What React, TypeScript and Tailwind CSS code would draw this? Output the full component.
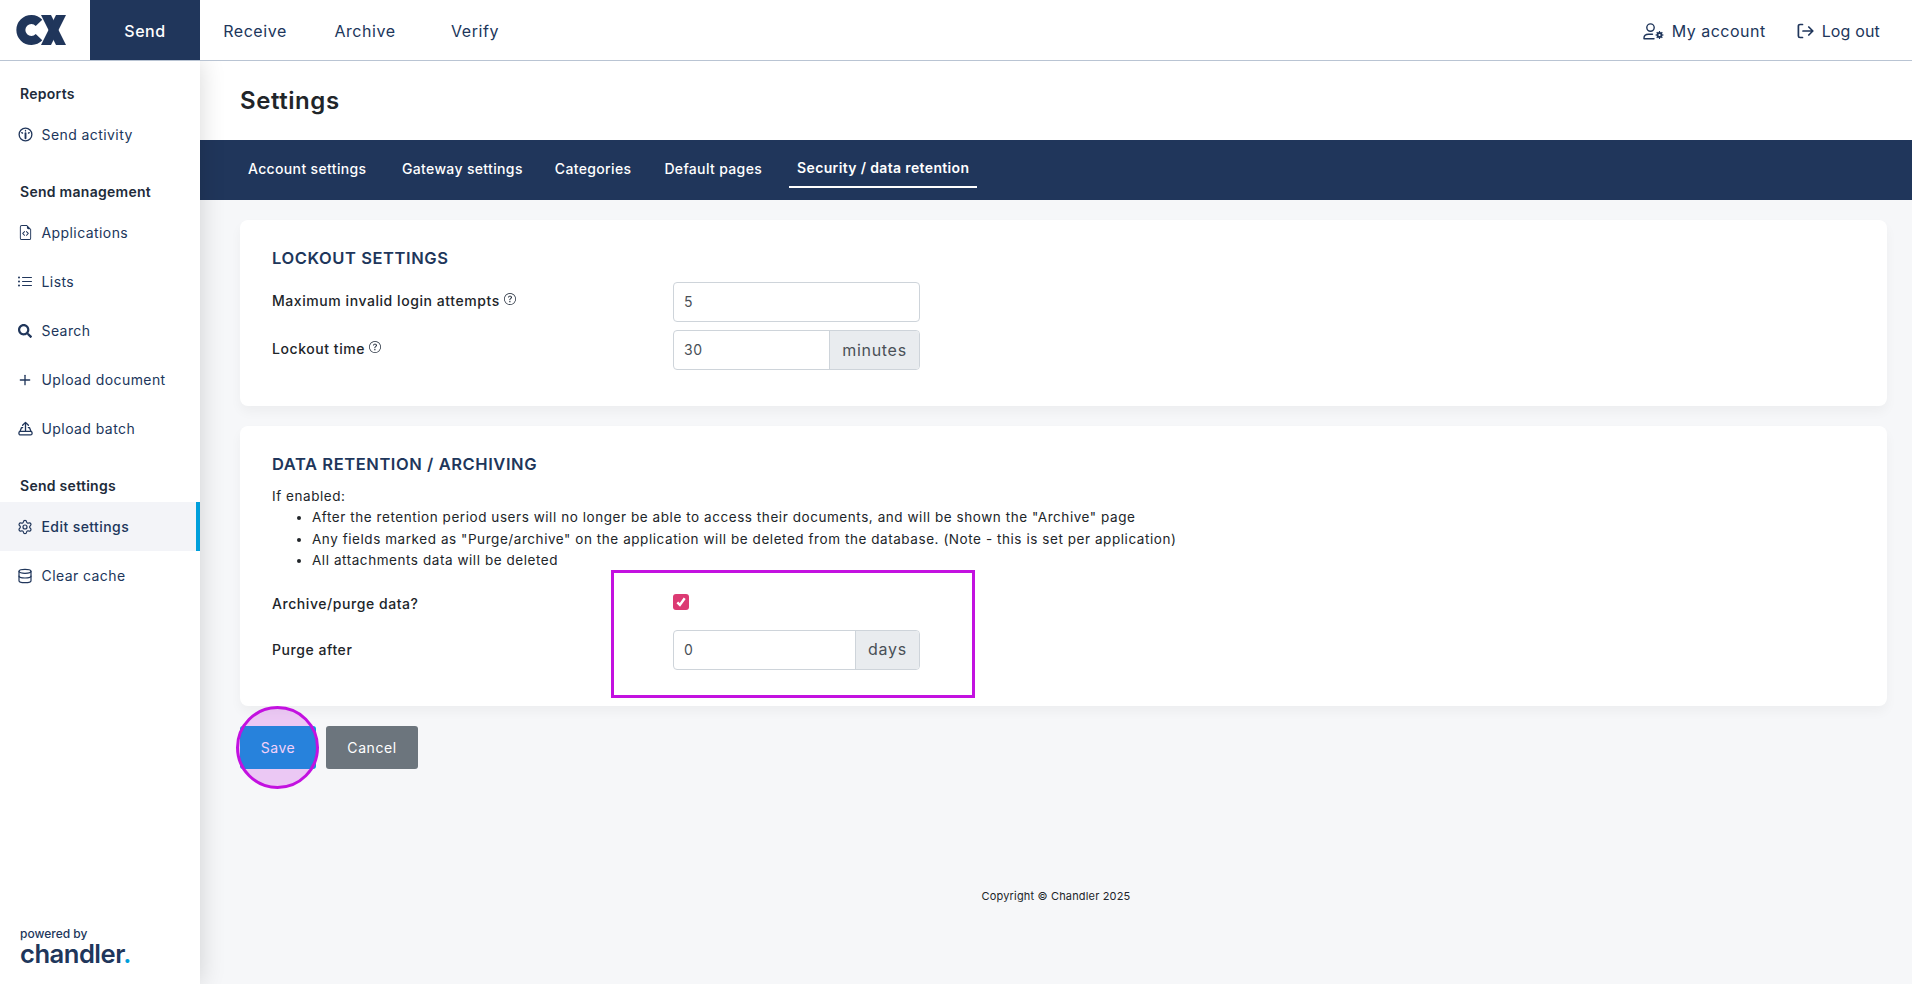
import React from "react";
import { Plus, Settings, Database } from "lucide-react";
import { BsFileEarmarkCode, BsListUl, BsQuestionCircle } from "react-icons/bs";
import { FaSearch } from "react-icons/fa";

function Logo() {
  return (
    <svg width="52" height="32" viewBox="0 0 52 32" className="block">
      <path d="M23 8.8 A 10.5 10.5 0 1 0 23 23.2" fill="none" stroke="#20365b" strokeWidth="9" />
      <path d="M25 1 H35 L50 31 H40 Z" fill="#20365b" />
      <path d="M50 1 H40 L25 31 H35 Z" fill="#20365b" />
    </svg>
  );
}

function Gauge() {
  return (
    <svg width="15" height="15" viewBox="0 0 16 16" fill="none" stroke="#20365b" strokeWidth="1.4" strokeLinecap="round">
      <circle cx="8" cy="8" r="6.8" />
      <path d="M8 3.6v.6M4 6l.8.5M12 6l-.8.5" />
      <path d="M8 6.5v5.5" strokeWidth="2" />
    </svg>
  );
}

function UploadBatch() {
  return (
    <svg width="15" height="15" viewBox="0 0 16 16" fill="none" stroke="#20365b" strokeWidth="1.4" strokeLinecap="round" strokeLinejoin="round">
      <path d="M8 10V1.6M4.9 4.6L8 1.5l3.1 3.1" />
      <path d="M5 7H3.8L2.2 11M11 7h1.2l1.6 4" />
      <rect x="1" y="11" width="14" height="3.8" rx="1.6" />
    </svg>
  );
}

function AccountIcon() {
  return (
    <svg width="21" height="17" viewBox="0 0 21 17" fill="none" stroke="#20365b" strokeWidth="1.4" strokeLinecap="round" className="mr-[8px]">
      <circle cx="7.5" cy="4.6" r="3.7" />
      <path d="M1 15.8v-.8c0-2.4 2-3.8 4.5-3.8h4M1 15.8h10" />
      <circle cx="16.5" cy="12" r="3" fill="#20365b" stroke="none" />
      <path d="M16.5 8v8M12.5 12h8M13.7 9.2l5.6 5.6M19.3 9.2l-5.6 5.6" strokeWidth="1.2" strokeLinecap="butt" />
      <circle cx="16.5" cy="12" r="1.1" fill="white" stroke="none" />
    </svg>
  );
}

function LogoutIcon() {
  return (
    <svg width="17" height="16" viewBox="0 0 17 16" fill="none" stroke="#20365b" strokeWidth="1.7" strokeLinecap="round" strokeLinejoin="round" className="ml-[31px] mr-[8px]">
      <path d="M5.5 1.5H3A1.6 1.6 0 0 0 1.4 3.1v9.8A1.6 1.6 0 0 0 3 14.5h2.5" />
      <path d="M6 8h9.6M11.8 4l4 4-4 4" />
    </svg>
  );
}

function SideHead({ children, mt }: { children: React.ReactNode; mt: string }) {
  return <div className={`pl-5 text-[14px] font-semibold text-[#212b3a] h-[20px] leading-[20px] tracking-[0.02em] mb-[6px] ${mt}`}>{children}</div>;
}

function SideItem({ icon, children, active }: { icon: React.ReactNode; children: React.ReactNode; active?: boolean }) {
  return (
    <div className={`flex items-center h-[49px] pl-[17px] text-[14px] text-[#20365b] tracking-[0.03em] ${active ? "bg-[#f3f4f8] border-r-4 border-[#009fdb] font-medium" : ""}`}>
      <span className="w-[16px] flex justify-center mr-[8.5px]">{icon}</span>
      <span>{children}</span>
    </div>
  );
}

function Tip() {
  return <BsQuestionCircle size={12} className="inline-block ml-1 -mt-[6px] text-[#212b3a]" />;
}

function InputBox({ value, addon, addonWidth }: { value: string; addon?: string; addonWidth?: string }) {
  return (
    <div className="flex w-[247px] h-[40px] border border-[#ced4da] rounded-[4px] bg-white overflow-hidden text-[#495057]">
      <div className="flex-1 flex items-center pl-[10px] pb-[1px] text-[14px]">{value}</div>
      {addon && (
        <div className={`flex items-center justify-center pb-[1px] bg-[#e9ecef] border-l border-[#ced4da] text-[16px] tracking-[0.045em] ${addonWidth}`}>{addon}</div>
      )}
    </div>
  );
}

export default function App() {
  const tabs = [
    { t: "Account settings", c: "mr-[19.5px]" },
    { t: "Gateway settings", c: "mr-[16px]" },
    { t: "Categories", c: "mr-[17px]" },
    { t: "Default pages", c: "mr-[19px]" },
    { t: "Security / data retention", c: "border-b-2 border-white font-semibold" },
  ];
  return (
    <div className="relative w-[1912px] h-[984px] overflow-hidden bg-white font-['Inter',sans-serif] tracking-[0.035em] flex flex-col">
      <header className="h-[61px] shrink-0 flex items-stretch bg-white border-b border-[#b9c4d3] relative z-20">
        <div className="w-[90px] flex items-center pl-4"><Logo /></div>
        <div className="w-[110px] h-[60px] pt-[2px] bg-[#20365b] text-white flex items-center justify-center text-[16px] font-medium">Send</div>
        {["Receive", "Archive", "Verify"].map((t) => (
          <div key={t} className="w-[110px] h-[60px] pt-[2px] flex items-center justify-center text-[16px] text-[#20365b]">{t}</div>
        ))}
        <div className="ml-auto flex items-center pt-[2px] text-[16px] text-[#20365b] pr-[32px] tracking-[0.03em]">
          <AccountIcon />
          <span>My account</span>
          <LogoutIcon />
          <span className="tracking-[0.01em]">Log out</span>
        </div>
      </header>
      <div className="flex flex-1 min-h-0">
        <aside className="w-[200px] shrink-0 bg-white shadow-[0_0_24px_rgba(0,0,0,0.16)] relative z-10 flex flex-col pt-[23px]">
          <SideHead mt="">Reports</SideHead>
          <SideItem icon={<Gauge />}>Send activity</SideItem>
          <SideHead mt="mt-[23px]">Send management</SideHead>
          <SideItem icon={<BsFileEarmarkCode size={15} />}>Applications</SideItem>
          <SideItem icon={<BsListUl size={16} />}>Lists</SideItem>
          <SideItem icon={<FaSearch size={14} />}>Search</SideItem>
          <SideItem icon={<Plus size={16} strokeWidth={2} />}>Upload document</SideItem>
          <SideItem icon={<UploadBatch />}>Upload batch</SideItem>
          <SideHead mt="mt-[23px]">Send settings</SideHead>
          <SideItem active icon={<Settings size={16} strokeWidth={1.8} />}>Edit settings</SideItem>
          <SideItem icon={<Database size={16} strokeWidth={1.8} />}>Clear cache</SideItem>
          <div className="mt-auto pl-5 pb-[17px] text-[#20365b]">
            <div className="text-[12px] leading-[12px] font-medium tracking-normal">powered by</div>
            <div className="text-[25.6px] leading-[27px] font-semibold tracking-[-0.02em]">chandler<span className="text-[#009fdb]">.</span></div>
          </div>
        </aside>
        <main className="flex-1 min-w-0 bg-[#f6f7f9] flex flex-col">
          <div className="h-[79px] bg-white flex items-center pl-[40px] shrink-0">
            <h1 className="text-[24px] font-semibold text-[#212529]">Settings</h1>
          </div>
          <nav className="h-[60px] bg-[#20365b] flex items-center pl-[40px] shrink-0 text-[14px] text-white font-medium tracking-[0.025em]">
            {tabs.map(({ t, c }) => (
              <div key={t} className={`h-[36px] px-[8px] pb-[4px] flex items-center ${c}`}>{t}</div>
            ))}
          </nav>
          <div className="pt-[20px] pl-[40px] pr-[25px] flex flex-col">
            <section className="h-[186px] bg-white rounded-[8px] shadow-[0_6px_12px_rgba(0,0,0,0.04)] pt-[28px] px-[32px]">
              <h2 className="text-[16.5px] leading-[20px] font-semibold text-[#20365b] tracking-[0.035em]">LOCKOUT SETTINGS</h2>
              <div className="mt-[14px] flex flex-col gap-[8px]">
                <div className="flex items-center">
                  <div className="w-[401px] pb-[3px] text-[14px] text-[#212529] font-medium">Maximum invalid login attempts<Tip /></div>
                  <InputBox value="5" />
                </div>
                <div className="flex items-center">
                  <div className="w-[401px] pb-[3px] text-[14px] text-[#212529] font-medium">Lockout time<Tip /></div>
                  <InputBox value="30" addon="minutes" addonWidth="w-[90px]" />
                </div>
              </div>
            </section>
            <section className="relative h-[280px] mt-[20px] bg-white rounded-[8px] shadow-[0_6px_12px_rgba(0,0,0,0.04)] pt-[28px] px-[32px]">
              <h2 className="text-[16.5px] leading-[20px] font-semibold text-[#20365b] tracking-[0.035em]">DATA RETENTION / ARCHIVING</h2>
              <div className="mt-[12px] text-[13.5px] leading-[21px] text-[#212529]">If enabled:</div>
              <ul className="list-disc pl-[40px] text-[13.5px] leading-[21.5px] text-[#212529]">
                <li>After the retention period users will no longer be able to access their documents, and will be shown the "Archive" page</li>
                <li>Any fields marked as "Purge/archive" on the application will be deleted from the database. (Note - this is set per application)</li>
                <li>All attachments data will be deleted</li>
              </ul>
              <div className="mt-[22px] flex items-center h-[16px]">
                <div className="w-[401px] pt-[3px] text-[14px] text-[#212529] font-medium">Archive/purge data?</div>
                <div className="w-[16px] h-[16px] bg-[#dc3a73] rounded-[3px] flex items-center justify-center">
                  <svg width="12" height="12" viewBox="0 0 12 12" fill="none" stroke="white" strokeWidth="2.4"><path d="M2.3 6.3l2.6 2.6 4.8-6.6" /></svg>
                </div>
              </div>
              <div className="mt-[20px] flex items-center">
                <div className="w-[401px] text-[14px] text-[#212529] font-medium">Purge after</div>
                <InputBox value="0" addon="days" addonWidth="w-[64px]" />
              </div>
              <div className="absolute left-[371px] top-[144px] w-[364px] h-[128px] border-[3px] border-[#c311e0]" />
            </section>
            <div className="relative mt-[20px] flex gap-[10px]">
              <button className="w-[76px] h-[43px] bg-[#009fdb] text-white text-[14px] rounded-[3px]">Save</button>
              <button className="w-[92px] h-[43px] bg-[#6c757d] text-white text-[14px] rounded-[3px]">Cancel</button>
              <div className="absolute -left-[4px] -top-[20px] w-[83px] h-[83px] rounded-full border-[3px] border-[#c311e0] bg-[#c311e0]/20" />
            </div>
          </div>
          <div className="mt-auto pb-[80px] text-center text-[11px] tracking-[0.015em] text-[#212529]">Copyright © Chandler 2025</div>
        </main>
      </div>
    </div>
  );
}
